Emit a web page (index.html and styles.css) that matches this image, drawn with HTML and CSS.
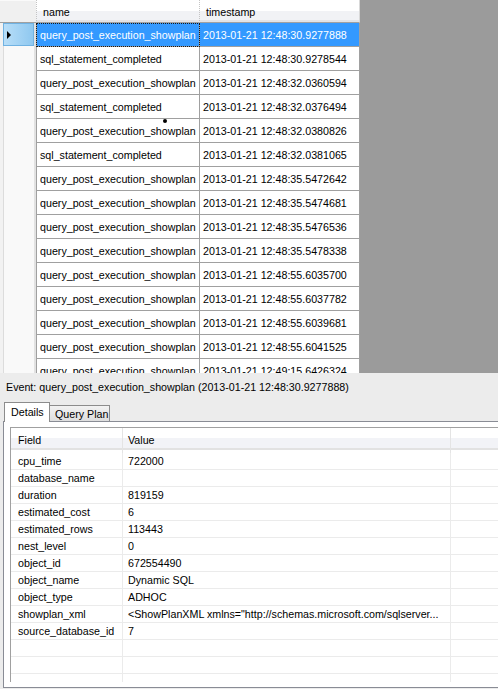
FILE: index.html
```html
<!DOCTYPE html>
<html>
<head>
<meta charset="utf-8">
<link rel="stylesheet" href="styles.css">
</head>
<body>
<div class="top">
  <div class="grid">
    <div class="hrow">
      <div class="corner"></div>
      <div class="hcell h-name">name</div>
      <div class="hcell h-ts">timestamp</div>
    </div>
    <div class="row sel">
      <div class="rh"><div class="mark"><span class="arrow"></span></div></div>
      <div class="cell c-name focus">query_post_execution_showplan</div>
      <div class="cell c-ts">2013-01-21 12:48:30.9277888</div>
    </div>
    <div class="row"><div class="rh"></div><div class="cell c-name">sql_statement_completed</div><div class="cell c-ts">2013-01-21 12:48:30.9278544</div></div>
    <div class="row"><div class="rh"></div><div class="cell c-name">query_post_execution_showplan</div><div class="cell c-ts">2013-01-21 12:48:32.0360594</div></div>
    <div class="row"><div class="rh"></div><div class="cell c-name">sql_statement_completed</div><div class="cell c-ts">2013-01-21 12:48:32.0376494</div></div>
    <div class="row"><div class="rh"></div><div class="cell c-name">query_post_execution_showplan</div><div class="cell c-ts">2013-01-21 12:48:32.0380826</div></div>
    <div class="row"><div class="rh"></div><div class="cell c-name">sql_statement_completed</div><div class="cell c-ts">2013-01-21 12:48:32.0381065</div></div>
    <div class="row"><div class="rh"></div><div class="cell c-name">query_post_execution_showplan</div><div class="cell c-ts">2013-01-21 12:48:35.5472642</div></div>
    <div class="row"><div class="rh"></div><div class="cell c-name">query_post_execution_showplan</div><div class="cell c-ts">2013-01-21 12:48:35.5474681</div></div>
    <div class="row"><div class="rh"></div><div class="cell c-name">query_post_execution_showplan</div><div class="cell c-ts">2013-01-21 12:48:35.5476536</div></div>
    <div class="row"><div class="rh"></div><div class="cell c-name">query_post_execution_showplan</div><div class="cell c-ts">2013-01-21 12:48:35.5478338</div></div>
    <div class="row"><div class="rh"></div><div class="cell c-name">query_post_execution_showplan</div><div class="cell c-ts">2013-01-21 12:48:55.6035700</div></div>
    <div class="row"><div class="rh"></div><div class="cell c-name">query_post_execution_showplan</div><div class="cell c-ts">2013-01-21 12:48:55.6037782</div></div>
    <div class="row"><div class="rh"></div><div class="cell c-name">query_post_execution_showplan</div><div class="cell c-ts">2013-01-21 12:48:55.6039681</div></div>
    <div class="row"><div class="rh"></div><div class="cell c-name">query_post_execution_showplan</div><div class="cell c-ts">2013-01-21 12:48:55.6041525</div></div>
    <div class="row"><div class="rh"></div><div class="cell c-name">query_post_execution_showplan</div><div class="cell c-ts">2013-01-21 12:49:15.6426324</div></div>
  </div>
  <span class="cursor"></span>
</div>
<div class="panel">
  <div class="event">Event: query_post_execution_showplan (2013-01-21 12:48:30.9277888)</div>
  <div class="tabs">
    <div class="tab active">Details</div>
    <div class="tab inactive">Query Plan</div>
  </div>
  <div class="page">
    <div class="dgrid">
      <div class="dhead"><div class="dh d1">Field</div><div class="dh d2">Value</div><div class="dh d3"></div></div>
      <div class="drow"><div class="dc d1">cpu_time</div><div class="dc d2">722000</div><div class="dc d3"></div></div>
      <div class="drow"><div class="dc d1">database_name</div><div class="dc d2"></div><div class="dc d3"></div></div>
      <div class="drow"><div class="dc d1">duration</div><div class="dc d2">819159</div><div class="dc d3"></div></div>
      <div class="drow"><div class="dc d1">estimated_cost</div><div class="dc d2">6</div><div class="dc d3"></div></div>
      <div class="drow"><div class="dc d1">estimated_rows</div><div class="dc d2">113443</div><div class="dc d3"></div></div>
      <div class="drow"><div class="dc d1">nest_level</div><div class="dc d2">0</div><div class="dc d3"></div></div>
      <div class="drow"><div class="dc d1">object_id</div><div class="dc d2">672554490</div><div class="dc d3"></div></div>
      <div class="drow"><div class="dc d1">object_name</div><div class="dc d2">Dynamic SQL</div><div class="dc d3"></div></div>
      <div class="drow"><div class="dc d1">object_type</div><div class="dc d2">ADHOC</div><div class="dc d3"></div></div>
      <div class="drow"><div class="dc d1">showplan_xml</div><div class="dc d2">&lt;ShowPlanXML xmlns="http://schemas.microsoft.com/sqlserver...</div><div class="dc d3"></div></div>
      <div class="drow"><div class="dc d1">source_database_id</div><div class="dc d2">7</div><div class="dc d3"></div></div>
      <div class="drow"><div class="dc d1"></div><div class="dc d2"></div><div class="dc d3"></div></div>
      <div class="drow"><div class="dc d1"></div><div class="dc d2"></div><div class="dc d3"></div></div>
      <div class="drow"><div class="dc d1"></div><div class="dc d2"></div><div class="dc d3"></div></div>
    </div>
  </div>
</div>
</body>
</html>
```

FILE: styles.css
```css
html, body {
  margin: 0;
  padding: 0;
}
body {
  width: 498px;
  height: 689px;
  overflow: hidden;
  font-family: "Liberation Sans", Arial, sans-serif;
  font-size: 10.7px;
  color: #000;
  background: #ececec;
}

/* ---------- top event grid ---------- */
.top {
  height: 373px;
  background: #9b9b9b;
  overflow: hidden;
  position: relative;
}
.grid {
  width: 360px;
  background: #fff;
}
.hrow {
  display: flex;
  height: 23px;
}
.corner {
  width: 36px;
  box-sizing: border-box;
  background: #f0f0f0;
  border-bottom: 1px solid #a0a0a0;
  border-top: 1px solid #fafafa;
}
.hcell {
  box-sizing: border-box;
  height: 23px;
  line-height: 24px;
  padding-left: 6px;
  border-bottom: 1px solid #a0a0a0;
  border-right: 1px dotted #c4c4c4;
  background: linear-gradient(#ffffff 0, #ffffff 11px, #f1f2f5 11px, #f1f2f5 20px, #e2e3e6 20px);
  white-space: nowrap;
  overflow: hidden;
}
.h-name {
  width: 164px;
  border-left: 1px dotted #c4c4c4;
}
.h-ts {
  width: 160px;
  border-right: 1px solid #d8d8d8;
}
.row {
  display: flex;
  height: 24px;
}
.rh {
  width: 36px;
  box-sizing: border-box;
  background: linear-gradient(to right, #f2f2f2 0, #f2f2f2 3px, #dcdcdc 3px, #dcdcdc 4px, #f9f9f9 4px, #f9f9f9 34px, #e2e2e2 34px);
  padding: 0 2px 1px 3px;
}
.mark {
  box-sizing: border-box;
  height: 23px;
  border: 1px solid #70b2e2;
  background: linear-gradient(to right, #b8def8, #8fc8f0);
  display: flex;
  align-items: center;
  padding-left: 3px;
}
.arrow {
  width: 0;
  height: 0;
  border-left: 4px solid #000;
  border-top: 4px solid transparent;
  border-bottom: 4px solid transparent;
}
.cell {
  box-sizing: border-box;
  height: 24px;
  line-height: 24px;
  padding-left: 3px;
  border-right: 1px solid #a0a0a0;
  border-bottom: 1px solid #a0a0a0;
  white-space: nowrap;
  overflow: hidden;
  background: #fff;
}
.c-name {
  width: 164px;
  border-left: 1px solid #a0a0a0;
}
.c-ts {
  width: 160px;
}
.sel .cell {
  background: #3399ff;
  color: #fff;
}
.focus {
  outline: 1px dotted #1a1a1a;
  outline-offset: -1px;
}
.cursor {
  position: absolute;
  left: 163px;
  top: 119px;
  width: 4px;
  height: 4px;
  border-radius: 50%;
  background: #000;
}

/* ---------- bottom detail panel ---------- */
.panel {
  height: 316px;
  box-sizing: border-box;
  padding-top: 7px;
  background: #ececec;
  overflow: hidden;
}
.event {
  height: 14px;
  line-height: 14px;
  padding-left: 6px;
  white-space: nowrap;
}
.tabs {
  display: flex;
  align-items: flex-end;
  height: 19px;
  margin-top: 8px;
  padding-left: 4px;
  position: relative;
  z-index: 1;
}
.tab {
  box-sizing: border-box;
  border: 1px solid #8c8c8c;
  border-bottom: none;
  white-space: nowrap;
}
.tab.active {
  width: 46px;
  height: 20px;
  margin-bottom: -1px;
  background: #fff;
  padding-left: 6px;
  line-height: 18px;
}
.tab.inactive {
  width: 60px;
  height: 16px;
  border-left: none;
  background: linear-gradient(#f2f2f2, #dedede);
  padding-left: 5px;
  line-height: 16px;
}
.page {
  margin-left: 3px;
  width: 520px;
  height: 267px;
  box-sizing: border-box;
  border: 1px solid #898c95;
  background: #fff;
  padding: 5px 0 0 6px;
}
.dgrid {
  height: 254px;
  border-left: 1px solid #a0a0a0;
  border-top: 1px solid #a0a0a0;
  overflow: hidden;
}
.dhead {
  display: flex;
  height: 25px;
}
.dh {
  box-sizing: border-box;
  height: 25px;
  line-height: 24px;
  background: linear-gradient(#ffffff 0, #ffffff 10px, #f2f3f7 10px, #f2f3f7 20px, #e2e2e2 20px, #e2e2e2 22px, #ffffff 22px);
  border-right: 1px solid #e4e4e4;
  white-space: nowrap;
}
.drow {
  display: flex;
  height: 17px;
}
.dc {
  box-sizing: border-box;
  height: 17px;
  line-height: 17px;
  border-right: 1px solid #ebebeb;
  border-bottom: 1px solid #ebebeb;
  white-space: nowrap;
  overflow: hidden;
}
.d1 {
  width: 112px;
  padding-left: 7px;
}
.d2 {
  width: 328px;
  padding-left: 5px;
}
.d3 {
  flex: 1;
  border-right: none;
}
```
